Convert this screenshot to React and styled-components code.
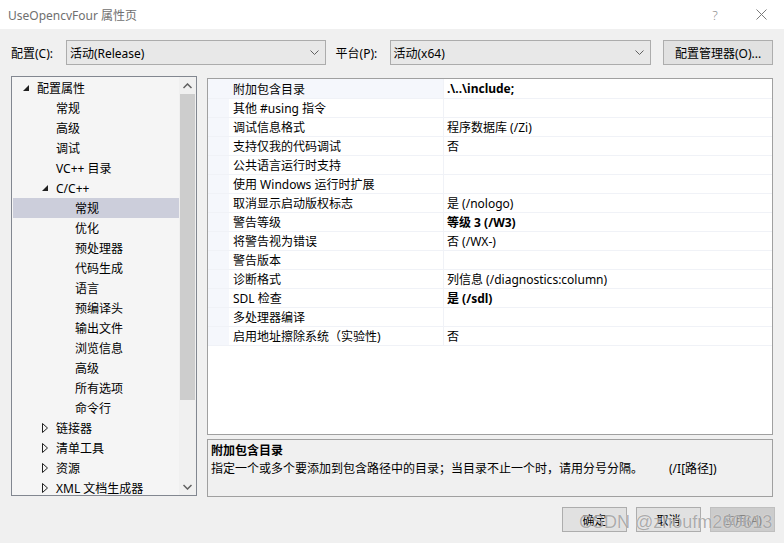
import React from "react";
import styled, { createGlobalStyle } from "styled-components";

const GlobalStyle = createGlobalStyle`
  html, body {
    margin: 0;
    padding: 0;
    overflow: hidden;
  }
  body {
    font-family: "Noto Sans", "Noto Sans CJK SC", sans-serif;
    font-size: 12px;
    color: #000;
  }
`;

const Window = styled.div`
  width: 784px;
  height: 543px;
  background: #f0f0f0;
  display: flex;
  flex-direction: column;
  position: relative;
  overflow: hidden;
`;

const TitleBar = styled.div`
  height: 29px;
  background: #fff;
  display: flex;
  align-items: center;
  padding-left: 8px;
  font-size: 12px;
  color: #6f6f6f;
`;

const TitleText = styled.div`
  flex: 1;
  font-family: "Noto Sans", "Noto Sans CJK SC", sans-serif;
`;

const TitleButton = styled.div`
  width: 46px;
  height: 29px;
  display: flex;
  align-items: center;
  justify-content: center;
  color: #8a8a8a;
  font-size: 13px;
  font-weight: 300;
`;

const ConfigRow = styled.div`
  display: flex;
  align-items: center;
  padding: 11px 11px 0 11px;
  height: 25px;
`;

const Label = styled.div`
  width: ${(p) => p.width}px;
  white-space: nowrap;
`;

const Select = styled.div`
  width: ${(p) => p.width}px;
  height: 23px;
  border: 1px solid #acacac;
  background: #e8e8e8;
  display: flex;
  align-items: center;
  padding-left: 3px;
  box-sizing: content-box;
  margin-right: ${(p) => p.gap}px;
  span {
    flex: 1;
  }
  svg {
    margin-right: 6px;
  }
`;

const ToolButton = styled.div`
  width: 108px;
  height: 23px;
  border: 1px solid #adadad;
  background: #e1e1e1;
  display: flex;
  align-items: center;
  justify-content: center;
`;

const Main = styled.div`
  display: flex;
  gap: 10px;
  padding: 11px 11px 0 11px;
  height: 421px;
`;

const Tree = styled.div`
  width: 185px;
  height: 418px;
  border: 1px solid #828790;
  background: #f5f5f5;
  display: flex;
  overflow: hidden;
`;

const TreeList = styled.div`
  flex: 1;
  padding-top: 1px;
`;

const TreeRow = styled.div`
  height: 20px;
  display: flex;
  align-items: center;
  padding-left: ${(p) => p.indent}px;
  margin-left: 1px;
  background: ${(p) => (p.selected ? "#cccedb" : "transparent")};
  white-space: nowrap;
`;

const Expander = styled.div`
  width: 14px;
  height: 20px;
  display: flex;
  align-items: center;
  justify-content: flex-start;
`;

const ScrollBar = styled.div`
  width: 17px;
  background: #f0f0f0;
  display: flex;
  flex-direction: column;
  align-items: center;
`;

const ScrollArrow = styled.div`
  height: 17px;
  width: 17px;
  display: flex;
  align-items: center;
  justify-content: center;
`;

const ScrollThumb = styled.div`
  width: 15px;
  height: 306px;
  background: #cdcdcd;
`;

const ScrollTrack = styled.div`
  flex: 1;
`;

const RightCol = styled.div`
  display: flex;
  flex-direction: column;
  gap: 4px;
  padding-top: 2px;
`;

const Grid = styled.div`
  width: 564px;
  height: 355px;
  border: 1px solid #a0a0a0;
  background: #fff;
`;

const GridRow = styled.div`
  display: flex;
  height: 19px;
  border-bottom: 1px solid #f0f2f7;
  box-sizing: border-box;
  &:first-child {
    height: 20px;
  }
`;

const Gutter = styled.div`
  width: 21px;
  background: #f5f7fc;
`;

const NameCell = styled.div`
  width: 210px;
  padding-left: 4px;
  display: flex;
  align-items: center;
  background: ${(p) => (p.active ? "#f5f7fc" : "#fff")};
  border-right: 1px solid #f0f2f7;
  white-space: nowrap;
`;

const ValueCell = styled.div`
  flex: 1;
  padding-left: 3px;
  display: flex;
  align-items: center;
  font-weight: ${(p) => (p.bold ? 700 : 400)};
  white-space: nowrap;
`;

const Desc = styled.div`
  width: 558px;
  height: 52px;
  border: 1px solid #a0a0a0;
  padding: 2px 3px;
  display: flex;
  flex-direction: column;
`;

const DescTitle = styled.div`
  font-weight: 700;
  height: 18px;
  line-height: 18px;
`;

const DescText = styled.div`
  display: flex;
  height: 18px;
  line-height: 18px;
  span:last-child {
    margin-left: 26px;
  }
`;

const Footer = styled.div`
  display: flex;
  justify-content: flex-end;
  gap: 9px;
  padding: 10px 9px 0 0;
`;

const DialogButton = styled.div`
  width: 63px;
  height: 23px;
  border: 1px solid ${(p) => (p.disabled ? "#bfbfbf" : "#adadad")};
  background: ${(p) => (p.disabled ? "#cccccc" : "#e1e1e1")};
  color: ${(p) => (p.disabled ? "#838383" : "#000")};
  display: flex;
  align-items: center;
  justify-content: center;
`;

const Watermark = styled.div`
  position: absolute;
  left: 579px;
  top: 512px;
  font-family: "Liberation Sans", "Noto Sans", sans-serif;
  font-size: 18px;
  color: rgba(120, 120, 120, 0.6);
  text-shadow: 0 0 1px rgba(255, 255, 255, 0.9);
  white-space: nowrap;
  pointer-events: none;
`;

const Chevron = () => (
  <svg width="9" height="6" viewBox="0 0 9 6">
    <polyline points="0.5,0.5 4.5,4.5 8.5,0.5" fill="none" stroke="#606060" strokeWidth="1" />
  </svg>
);

const Expanded = () => (
  <svg width="7" height="7" viewBox="0 0 7 7">
    <polygon points="6,0 6,6 0,6" fill="#202020" />
  </svg>
);

const Collapsed = () => (
  <svg width="6" height="10" viewBox="0 0 6 10">
    <polygon points="0.5,0.5 5.5,5 0.5,9.5" fill="none" stroke="#202020" strokeWidth="1" />
  </svg>
);

const treeItems = [
  { text: "配置属性", indent: 10, exp: "open" },
  { text: "常规", indent: 43 },
  { text: "高级", indent: 43 },
  { text: "调试", indent: 43 },
  { text: "VC++ 目录", indent: 43 },
  { text: "C/C++", indent: 29, exp: "open" },
  { text: "常规", indent: 62, selected: true },
  { text: "优化", indent: 62 },
  { text: "预处理器", indent: 62 },
  { text: "代码生成", indent: 62 },
  { text: "语言", indent: 62 },
  { text: "预编译头", indent: 62 },
  { text: "输出文件", indent: 62 },
  { text: "浏览信息", indent: 62 },
  { text: "高级", indent: 62 },
  { text: "所有选项", indent: 62 },
  { text: "命令行", indent: 62 },
  { text: "链接器", indent: 29, exp: "closed" },
  { text: "清单工具", indent: 29, exp: "closed" },
  { text: "资源", indent: 29, exp: "closed" },
  { text: "XML 文档生成器", indent: 29, exp: "closed" },
];

const props = [
  ["附加包含目录", ".\\..\\include;", true],
  ["其他 #using 指令", ""],
  ["调试信息格式", "程序数据库 (/Zi)"],
  ["支持仅我的代码调试", "否"],
  ["公共语言运行时支持", ""],
  ["使用 Windows 运行时扩展", ""],
  ["取消显示启动版权标志", "是 (/nologo)"],
  ["警告等级", "等级 3 (/W3)", true],
  ["将警告视为错误", "否 (/WX-)"],
  ["警告版本", ""],
  ["诊断格式", "列信息 (/diagnostics:column)"],
  ["SDL 检查", "是 (/sdl)", true],
  ["多处理器编译", ""],
  ["启用地址擦除系统（实验性)", "否"],
];

const App = () => {
  return (
    <Window>
      <GlobalStyle />
      <TitleBar>
        <TitleText>UseOpencvFour 属性页</TitleText>
        <TitleButton>?</TitleButton>
        <TitleButton>
          <svg width="11" height="11" viewBox="0 0 11 11">
            <path d="M0.5 0.5 L10.5 10.5 M10.5 0.5 L0.5 10.5" stroke="#7a7a7a" strokeWidth="1" />
          </svg>
        </TitleButton>
      </TitleBar>

      <ConfigRow>
        <Label width={55}>配置(C):</Label>
        <Select width={255} gap={10}>
          <span>活动(Release)</span>
          <Chevron />
        </Select>
        <Label width={54}>平台(P):</Label>
        <Select width={257} gap={12}>
          <span>活动(x64)</span>
          <Chevron />
        </Select>
        <ToolButton>配置管理器(O)...</ToolButton>
      </ConfigRow>

      <Main>
        <Tree>
          <TreeList>
            {treeItems.map((item, i) => (
              <TreeRow key={i} indent={item.indent} selected={item.selected}>
                {item.exp && (
                  <Expander>
                    {item.exp === "open" ? <Expanded /> : <Collapsed />}
                  </Expander>
                )}
                {item.text}
              </TreeRow>
            ))}
          </TreeList>
          <ScrollBar>
            <ScrollArrow>
              <svg width="9" height="6" viewBox="0 0 9 6">
                <polyline points="0.5,5 4.5,1 8.5,5" fill="none" stroke="#606060" strokeWidth="1.5" />
              </svg>
            </ScrollArrow>
            <ScrollThumb />
            <ScrollTrack />
            <ScrollArrow>
              <svg width="9" height="6" viewBox="0 0 9 6">
                <polyline points="0.5,1 4.5,5 8.5,1" fill="none" stroke="#606060" strokeWidth="1.5" />
              </svg>
            </ScrollArrow>
          </ScrollBar>
        </Tree>

        <RightCol>
          <Grid>
            {props.map(([name, value, bold], i) => (
              <GridRow key={i}>
                <Gutter />
                <NameCell active={i === 0}>{name}</NameCell>
                <ValueCell bold={bold}>{value}</ValueCell>
              </GridRow>
            ))}
          </Grid>
          <Desc>
            <DescTitle>附加包含目录</DescTitle>
            <DescText>
              <span>指定一个或多个要添加到包含路径中的目录；当目录不止一个时，请用分号分隔。</span>
              <span>(/I[路径])</span>
            </DescText>
          </Desc>
        </RightCol>
      </Main>

      <Footer>
        <DialogButton>确定</DialogButton>
        <DialogButton>取消</DialogButton>
        <DialogButton disabled>应用(A)</DialogButton>
      </Footer>
      <Watermark>CSDN @zhoufm260613</Watermark>
    </Window>
  );
};

export default App;
